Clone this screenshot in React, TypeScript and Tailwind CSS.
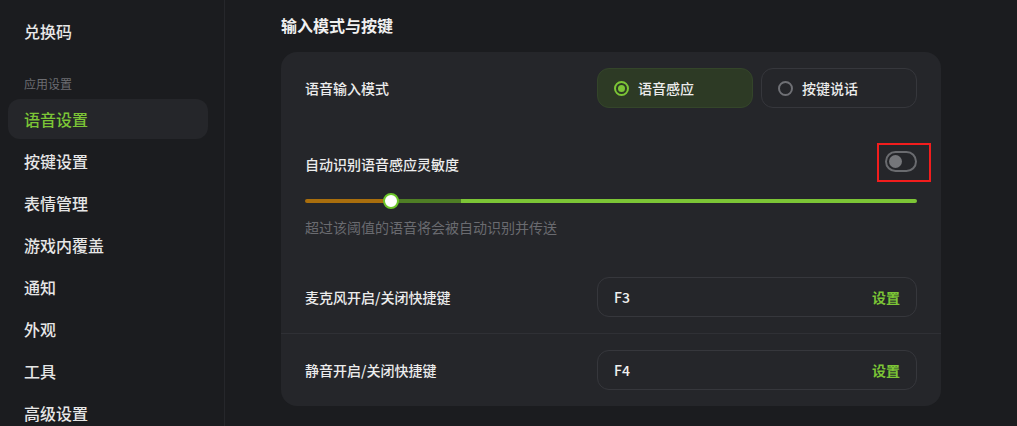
import { useState } from "react";

const navItems = ["语音设置", "按键设置", "表情管理", "游戏内覆盖", "通知", "外观", "工具", "高级设置"];

function Radio({ checked, label }: { checked: boolean; label: string }) {
  return (
    <div
      className={`flex h-10 w-[156px] items-center gap-[9px] rounded-xl border pl-4 ${
        checked ? "border-[#34452a] bg-[#2d3a25]" : "border-[#36373c] bg-transparent"
      }`}
    >
      <span
        className={`flex h-[15px] w-[15px] items-center justify-center rounded-full border-2 ${
          checked ? "border-[#7cc536]" : "border-[#6f7075]"
        }`}
      >
        {checked && <span className="h-[7px] w-[7px] rounded-full bg-[#7cc536]" />}
      </span>
      <span className="text-sm font-medium text-[#ececec]">{label}</span>
    </div>
  );
}

function KeyBox({ value }: { value: string }) {
  return (
    <div className="flex h-10 w-[320px] items-center justify-between rounded-xl border border-[#36373c] px-4">
      <span className="text-sm font-medium text-[#f0f0f0]">{value}</span>
      <span className="text-sm font-bold text-[#7cc536]">设置</span>
    </div>
  );
}

export default function App() {
  const [active] = useState("语音设置");

  return (
    <div
      className="flex h-[426px] w-[1017px] overflow-hidden bg-[#1b1c1f] text-[#e6e6e6]"
      style={{ fontFamily: '"Noto Sans CJK SC", "Noto Sans", sans-serif' }}
    >
      {/* 侧边栏 */}
      <aside className="w-[225px] shrink-0 border-r border-[#26272b] px-2">
        <div className="mt-[11px] flex h-10 items-center px-4 text-base font-medium text-[#e8e8e8]">兑换码</div>
        <div className="mt-[23px] px-4 text-xs leading-5 text-[#6c6d72]">应用设置</div>
        <nav className="mt-[5px] flex flex-col gap-[2px]">
          {navItems.map((item) => (
            <div
              key={item}
              className={`flex h-10 w-[200px] items-center rounded-xl px-4 text-base font-medium ${
                item === active ? "bg-[#25262a] text-[#7cc536]" : "text-[#e6e6e6]"
              }`}
            >
              {item}
            </div>
          ))}
        </nav>
      </aside>

      {/* 主内容 */}
      <main className="flex-1 pl-[56px] pr-[76px]">
        <h2 className="mt-[14px] text-base font-bold leading-[22px] text-[#f0f0f0]">输入模式与按键</h2>

        <section className="mt-[16px] rounded-2xl bg-[#25262a]">
          <div className="px-6 pt-4">
            {/* 语音输入模式 */}
            <div className="flex items-center justify-between">
              <span className="text-sm font-medium text-[#ececec]">语音输入模式</span>
              <div className="flex gap-2">
                <Radio checked label="语音感应" />
                <Radio checked={false} label="按键说话" />
              </div>
            </div>

            {/* 灵敏度 */}
            <div className="mt-[41px] flex h-[24px] items-center justify-between">
              <span className="mt-[5px] text-sm font-medium text-[#ececec]">自动识别语音感应灵敏度</span>
              <div className="relative flex h-[21px] w-8 items-center rounded-full border-2 border-[#6a6b6f] px-[2px]">
                <span className="h-[13px] w-[13px] rounded-full bg-[#75767a]" />
                <div className="absolute -left-[10px] -top-[10px] h-[39px] w-[54px] border-2 border-[#f21d1d]" />
              </div>
            </div>

            <div className="relative mt-[26px] flex h-1 w-full">
              <div className="h-1 w-[86px] rounded-l-full bg-[#a96e0d]" />
              <div className="h-1 w-[70px] bg-[#4f7e25]" />
              <div className="h-1 flex-1 rounded-r-full bg-[#7cc536]" />
              <div className="absolute left-[78px] top-[-6px] h-4 w-4 rounded-full border-2 border-[#6cc52a] bg-white" />
            </div>
            <p className="mt-[14px] text-sm leading-5 text-[#6a6b70]">超过该阈值的语音将会被自动识别并传送</p>

            <div className="mt-[40px] flex items-center justify-between pb-4">
              <span className="text-sm font-medium text-[#ececec]">麦克风开启/关闭快捷键</span>
              <KeyBox value="F3" />
            </div>
          </div>

          <div className="h-px bg-[#2f3035]" />

          <div className="flex items-center justify-between px-6 py-4">
            <span className="text-sm font-medium text-[#ececec]">静音开启/关闭快捷键</span>
            <KeyBox value="F4" />
          </div>
        </section>
      </main>
    </div>
  );
}
